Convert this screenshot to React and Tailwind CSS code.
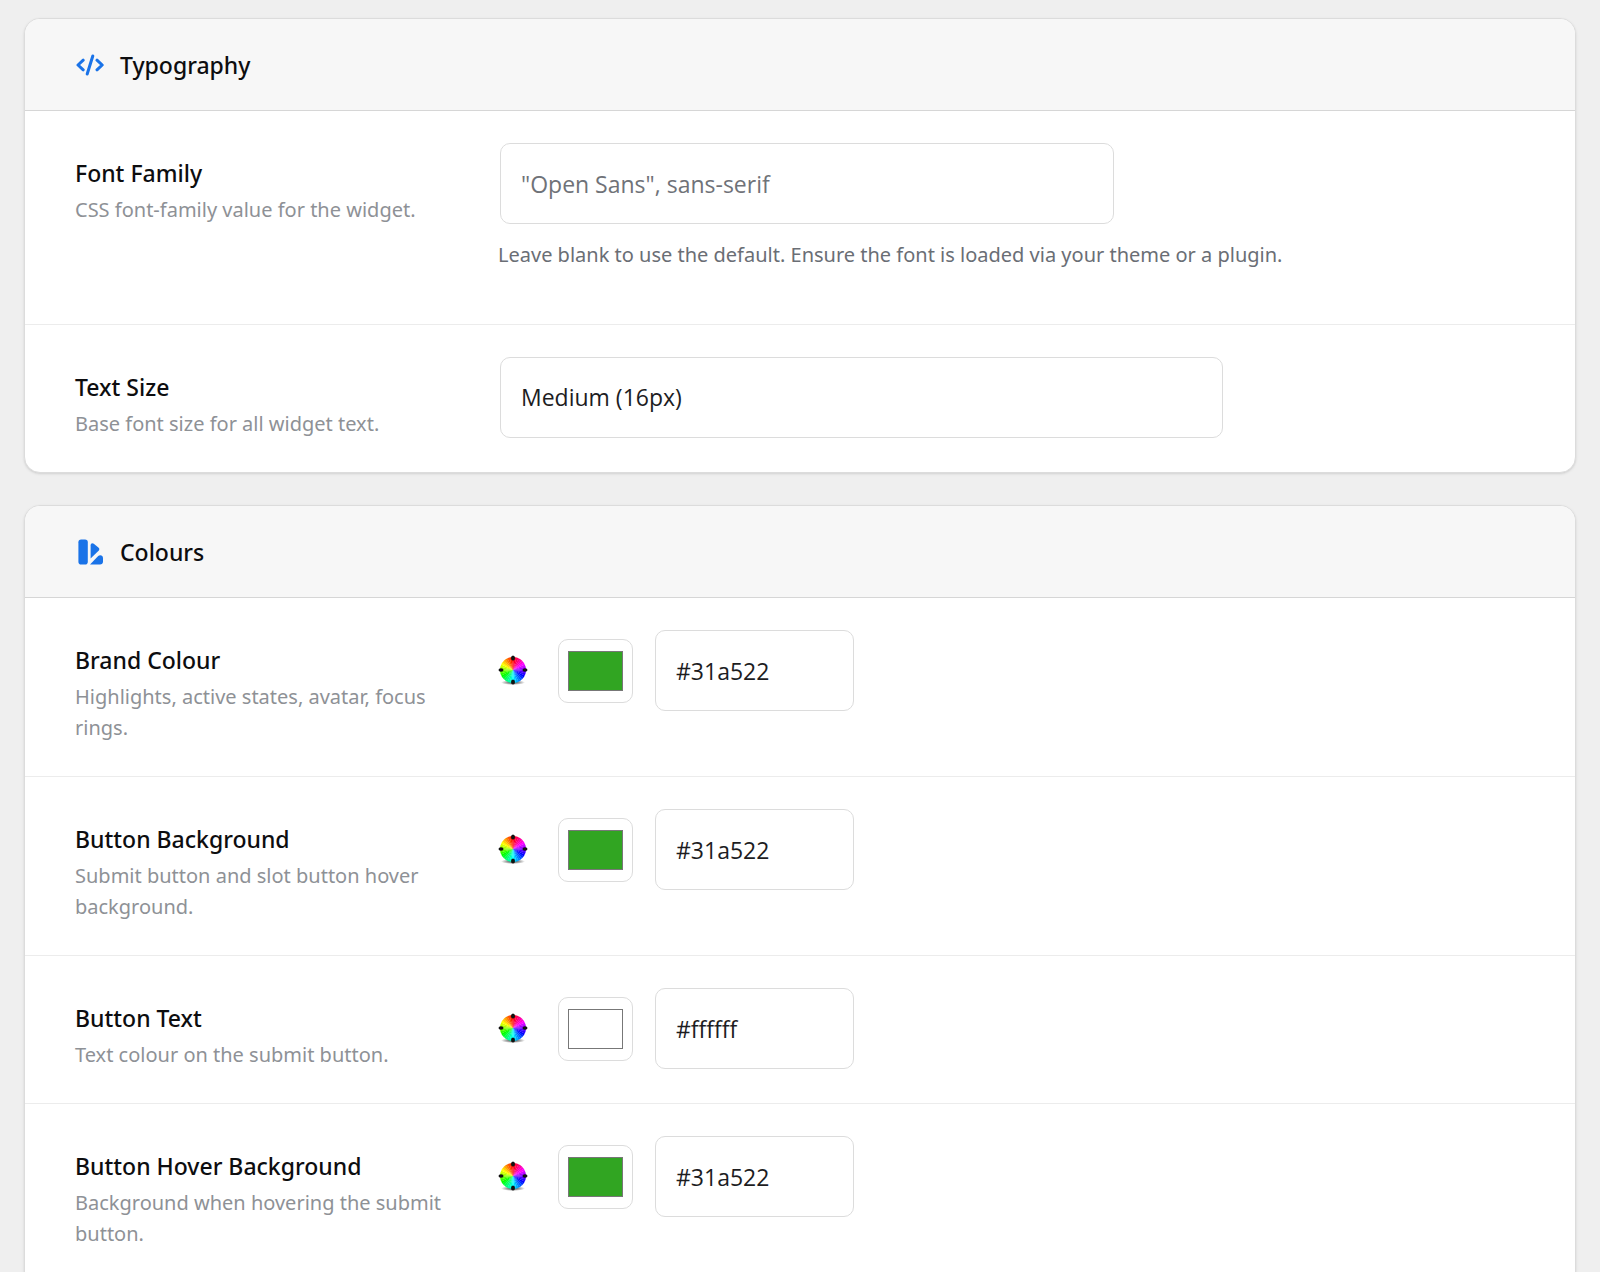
import { useState } from 'react';

const COLOUR_FIELDS = [
  {
    id: 'brand',
    label: 'Brand Colour',
    hint: 'Highlights, active states, avatar, focus rings.',
    value: '#31a522',
  },
  {
    id: 'button-bg',
    label: 'Button Background',
    hint: 'Submit button and slot button hover background.',
    value: '#31a522',
  },
  {
    id: 'button-text',
    label: 'Button Text',
    hint: 'Text colour on the submit button.',
    value: '#ffffff',
  },
  {
    id: 'button-hover-bg',
    label: 'Button Hover Background',
    hint: 'Background when hovering the submit button.',
    value: '#31a522',
  },
];

const headingClass = 'text-[23px] leading-8 font-medium text-[#0d0d0f]';
const hintClass = 'text-[20px] leading-[31px]';

const fieldClass =
  "h-[81px] max-w-full rounded-[10px] border border-[#dcdcdc] bg-white px-5 font-['Open_Sans',sans-serif] text-[23px] text-[#1d1d1f] outline-none focus:border-[#1a73e8]";

function CodeIcon() {
  return (
    <svg
      width="28"
      height="24"
      viewBox="0 0 28 24"
      fill="none"
      stroke="#1a73e8"
      strokeWidth="3"
      strokeLinecap="round"
      strokeLinejoin="round"
    >
      <path d="M7.2 7.2 2 12l5.2 4.8" />
      <path d="M16.8 3 11.2 21" />
      <path d="M21 7.2 26.2 12 21 16.8" />
    </svg>
  );
}

function SwatchIcon() {
  return (
    <svg width="28" height="26" viewBox="-2 0 28 26" fill="#1a73e8">
      <rect x="0.4" y="0.5" width="9.4" height="25" rx="2.8" />
      <path d="M12.6 6.4c0-2 1.8-2.7 3.2-1.6l4.6 3.7c1.1.9 1.2 2.2.2 3.2l-8 7.8z" />
      <path d="M12 25.5 20.2 17c.6-.6 1.2-.8 2-.8 1.800 0 2.800 1.300 2.800 3v3.300c0 1.800-1.200 3-3 3z" />
    </svg>
  );
}

const WEDGES = Array.from({ length: 36 }, (_, i) => {
  const point = (deg) => {
    const rad = (deg * Math.PI) / 180;
    return `${(15 + 13 * Math.sin(rad)).toFixed(2)} ${(15 - 13 * Math.cos(rad)).toFixed(2)}`;
  };
  return {
    d: `M15 15 L${point(i * 10 - 5.5)} A13 13 0 0 1 ${point(i * 10 + 5.5)} Z`,
    fill: `hsl(${360 - i * 10} 100% 50%)`,
  };
});

function ColourWheel() {
  return (
    <svg width="30" height="32" viewBox="0 0 30 32" className="shrink-0">
      <defs>
        <radialGradient id="wheel-shadow">
          <stop offset="0" stopColor="#000" stopOpacity="0.8" />
          <stop offset="1" stopColor="#000" stopOpacity="0" />
        </radialGradient>
      </defs>
      <ellipse cx="15" cy="27.5" rx="12" ry="2.5" fill="url(#wheel-shadow)" />
      {WEDGES.map((w) => (
        <path key={w.d} d={w.d} fill={w.fill} />
      ))}
      <g fill="#111">
        <ellipse cx="15" cy="3" rx="2" ry="2.5" />
        <ellipse cx="15" cy="27" rx="2" ry="2.5" />
        <ellipse cx="3" cy="15" rx="2.5" ry="1.7" />
        <ellipse cx="27" cy="15" rx="2.5" ry="1.7" />
      </g>
    </svg>
  );
}

function Card({ icon, title, className = '', children }) {
  return (
    <section
      className={`overflow-hidden rounded-2xl border border-[#dcdcdc] bg-white shadow-sm ${className}`}
    >
      <header className="flex h-[92px] items-center gap-4 border-b border-[#d6d6d6] bg-[#f7f7f7] px-[51px]">
        {icon}
        <h2 className={headingClass}>{title}</h2>
      </header>
      <div className="divide-y divide-[#ececec]">{children}</div>
    </section>
  );
}

function Row({ id, label, hint, children }) {
  return (
    <div className="grid grid-cols-[423px_1fr] pl-[50px]">
      <div className="pt-[46px] pr-9 pb-[33px]">
        <label htmlFor={id} className={`block ${headingClass}`}>
          {label}
        </label>
        <p className={`mt-[5px] text-[#8e9196] ${hintClass}`}>{hint}</p>
      </div>
      <div className="pt-8 pr-8 pb-8">{children}</div>
    </div>
  );
}

function ColourField({ field }) {
  const [value, setValue] = useState(field.value);
  const onChange = (e) => setValue(e.target.value);

  return (
    <Row id={field.id} label={field.label} hint={field.hint}>
      <div className="flex items-center">
        <ColourWheel />
        <input
          type="color"
          aria-label={`${field.label} picker`}
          value={value}
          onChange={onChange}
          className="ml-[30px] h-16 w-[75px] shrink-0 cursor-pointer rounded-[10px] border border-[#dcdcdc] bg-white p-[7px]"
        />
        <input
          id={field.id}
          type="text"
          value={value}
          onChange={onChange}
          className={`${fieldClass} ml-[22px] w-[199px]`}
        />
      </div>
    </Row>
  );
}

export default function App() {
  const [fontFamily, setFontFamily] = useState('');
  const [textSize, setTextSize] = useState('medium');

  return (
    <main className="h-screen space-y-8 overflow-hidden bg-[#efefef] px-6 pt-[18px] font-['Noto_Sans',sans-serif]">
      <Card icon={<CodeIcon />} title="Typography">
        <Row id="font-family" label="Font Family" hint="CSS font-family value for the widget.">
          <input
            id="font-family"
            type="text"
            value={fontFamily}
            onChange={(e) => setFontFamily(e.target.value)}
            placeholder={'"Open Sans", sans-serif'}
            className={`${fieldClass} ml-[2px] block w-[614px] placeholder:text-[#6f7278]`}
          />
          <p className={`mt-[15px] mb-[22px] text-[#6a6e75] ${hintClass}`}>
            Leave blank to use the default. Ensure the font is loaded via your theme or a plugin.
          </p>
        </Row>
        <Row id="text-size" label="Text Size" hint="Base font size for all widget text.">
          <select
            id="text-size"
            value={textSize}
            onChange={(e) => setTextSize(e.target.value)}
            className={`${fieldClass} ml-[2px] block w-[723px] appearance-none`}
          >
            <option value="small">Small (14px)</option>
            <option value="medium">Medium (16px)</option>
            <option value="large">Large (18px)</option>
          </select>
        </Row>
      </Card>

      <Card icon={<SwatchIcon />} title="Colours" className="pb-8">
        {COLOUR_FIELDS.map((field) => (
          <ColourField key={field.id} field={field} />
        ))}
      </Card>
    </main>
  );
}
